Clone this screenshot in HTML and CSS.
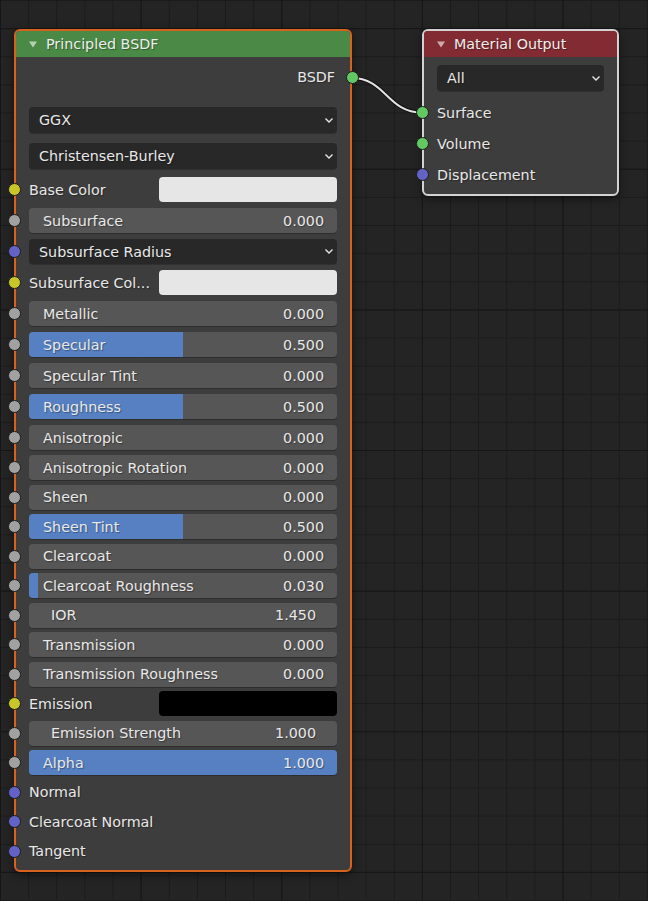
FILE: index.html
```html
<!DOCTYPE html>
<html>
<head>
<meta charset="utf-8">
<link rel="stylesheet" href="styles.css">
</head>
<body>
<div class="canvas">
  <svg class="link" width="648" height="901" viewBox="0 0 648 901">
    <path d="M351.5 78 C 386 78, 387 112.5, 422 112.5" class="link-shadow"/>
    <path d="M351.5 78 C 386 78, 387 112.5, 422 112.5" class="link-line"/>
  </svg>

  <div class="node principled">
    <div class="node-header green">
      <svg class="tri" width="8" height="7" viewBox="0 0 8 7"><path d="M0 0.5 H8 L4 6.5 Z"/></svg>
      <span class="title">Principled BSDF</span>
    </div>
    <div class="node-body body-principled">
      <div class="row out-row"><span class="lbl">BSDF</span><i class="sock sock-out green-s"></i></div>
      <div class="spacer"></div>
      <div class="row drop-row"><div class="dropdown"><span>GGX</span><svg class="chev" width="8" height="5" viewBox="0 0 8 5"><path d="M0.5 0.5 L4 4 L7.5 0.5"/></svg></div></div>
      <div class="row drop-row"><div class="dropdown"><span>Christensen-Burley</span><svg class="chev" width="8" height="5" viewBox="0 0 8 5"><path d="M0.5 0.5 L4 4 L7.5 0.5"/></svg></div></div>

      <div class="group-a">
        <div class="row"><i class="sock yellow-s"></i><span class="lbl">Base Color</span><div class="swatch white"></div></div>
        <div class="row"><i class="sock grey-s"></i><div class="field"><span>Subsurface</span><span>0.000</span></div></div>
        <div class="row"><i class="sock blue-s"></i><div class="dropdown short"><span>Subsurface Radius</span><svg class="chev" width="8" height="5" viewBox="0 0 8 5"><path d="M0.5 0.5 L4 4 L7.5 0.5"/></svg></div></div>
        <div class="row"><i class="sock yellow-s"></i><span class="lbl">Subsurface Col...</span><div class="swatch white"></div></div>
        <div class="row"><i class="sock grey-s"></i><div class="field"><span>Metallic</span><span>0.000</span></div></div>
        <div class="row"><i class="sock grey-s"></i><div class="field"><div class="fill" style="width:50%"></div><span>Specular</span><span>0.500</span></div></div>
        <div class="row"><i class="sock grey-s"></i><div class="field"><span>Specular Tint</span><span>0.000</span></div></div>
        <div class="row"><i class="sock grey-s"></i><div class="field"><div class="fill" style="width:50%"></div><span>Roughness</span><span>0.500</span></div></div>
        <div class="row"><i class="sock grey-s"></i><div class="field"><span>Anisotropic</span><span>0.000</span></div></div>
      </div>

      <div class="group-b">
        <div class="row"><i class="sock grey-s"></i><div class="field"><span>Anisotropic Rotation</span><span>0.000</span></div></div>
        <div class="row"><i class="sock grey-s"></i><div class="field"><span>Sheen</span><span>0.000</span></div></div>
        <div class="row"><i class="sock grey-s"></i><div class="field"><div class="fill" style="width:50%"></div><span>Sheen Tint</span><span>0.500</span></div></div>
        <div class="row"><i class="sock grey-s"></i><div class="field"><span>Clearcoat</span><span>0.000</span></div></div>
        <div class="row"><i class="sock grey-s"></i><div class="field"><div class="fill" style="width:3%"></div><span>Clearcoat Roughness</span><span>0.030</span></div></div>
        <div class="row"><i class="sock grey-s"></i><div class="field number"><span>IOR</span><span>1.450</span></div></div>
        <div class="row"><i class="sock grey-s"></i><div class="field"><span>Transmission</span><span>0.000</span></div></div>
        <div class="row"><i class="sock grey-s"></i><div class="field"><span>Transmission Roughness</span><span>0.000</span></div></div>
        <div class="row"><i class="sock yellow-s"></i><span class="lbl">Emission</span><div class="swatch black"></div></div>
        <div class="row"><i class="sock grey-s"></i><div class="field number"><span>Emission Strength</span><span>1.000</span></div></div>
        <div class="row"><i class="sock grey-s"></i><div class="field"><div class="fill" style="width:100%"></div><span>Alpha</span><span>1.000</span></div></div>
        <div class="row"><i class="sock blue-s"></i><span class="lbl">Normal</span></div>
        <div class="row"><i class="sock blue-s"></i><span class="lbl">Clearcoat Normal</span></div>
        <div class="row"><i class="sock blue-s"></i><span class="lbl">Tangent</span></div>
      </div>
    </div>
  </div>

  <div class="node output">
    <div class="node-header red">
      <svg class="tri" width="8" height="7" viewBox="0 0 8 7"><path d="M0 0.5 H8 L4 6.5 Z"/></svg>
      <span class="title">Material Output</span>
    </div>
    <div class="node-body body-output">
      <div class="row all-row"><div class="dropdown"><span>All</span><svg class="chev" width="8" height="5" viewBox="0 0 8 5"><path d="M0.5 0.5 L4 4 L7.5 0.5"/></svg></div></div>
      <div class="spacer-s"></div>
      <div class="row"><i class="sock green-s"></i><span class="lbl">Surface</span></div>
      <div class="row"><i class="sock green-s"></i><span class="lbl">Volume</span></div>
      <div class="row"><i class="sock blue-s"></i><span class="lbl">Displacement</span></div>
    </div>
  </div>
</div>
</body>
</html>
```

FILE: styles.css
```css
html, body {
  margin: 0;
  padding: 0;
  background: #232323;
}

.canvas {
  position: relative;
  width: 648px;
  height: 901px;
  overflow: hidden;
  font-family: "DejaVu Sans", "Liberation Sans", sans-serif;
  font-size: 14.3px;
  color: #e8e8e8;
  background-color: #242424;
  background-image:
    linear-gradient(to right, #161616 1px, transparent 1px),
    linear-gradient(to bottom, #161616 1px, transparent 1px),
    linear-gradient(to right, #1b1b1b 1px, transparent 1px),
    linear-gradient(to bottom, #1b1b1b 1px, transparent 1px);
  background-size:
    140.625px 100%,
    100% 140.625px,
    28.125px 100%,
    100% 28.125px;
  background-position:
    0 0,
    0 28.125px,
    0 0,
    0 0;
}

.link {
  position: absolute;
  left: 0;
  top: 0;
}

.link-shadow {
  fill: none;
  stroke: rgba(0, 0, 0, 0.55);
  stroke-width: 4;
}

.link-line {
  fill: none;
  stroke: #e4e4e4;
  stroke-width: 2;
}

.node {
  position: absolute;
  box-sizing: border-box;
  border-radius: 6px;
  background: rgba(64, 64, 64, 0.93);
  box-shadow: 0 3px 10px rgba(0, 0, 0, 0.45);
}

.principled {
  left: 14px;
  top: 29px;
  width: 338px;
  height: 843px;
  border: 2px solid #d6621d;
}

.output {
  left: 422px;
  top: 29px;
  width: 197px;
  height: 167px;
  border: 2px solid #d2d2d2;
}

.node-header {
  height: 26px;
  display: flex;
  align-items: center;
  padding-left: 13px;
  border-radius: 4px 4px 0 0;
  gap: 9px;
}

.node-header.green {
  background: #4a8a46;
}

.node-header.red {
  background: #832b33;
}

.tri {
  display: block;
  fill: rgba(255, 255, 255, 0.6);
  margin-top: 1px;
}

.title {
  color: #ececec;
  text-shadow: 1px 1px 1px rgba(0, 0, 0, 0.35);
}

.body-principled {
  padding: 5px 0 4px;
}

.body-output {
  padding: 5px 0 4px;
}

.row {
  position: relative;
  display: flex;
  align-items: center;
  padding: 0 13px;
  height: 31px;
}

.group-b .row {
  height: 29.5px;
}

.out-row {
  height: 30px;
  justify-content: flex-end;
  padding-right: 15px;
}

.spacer {
  height: 10px;
}

.spacer-s {
  height: 3px;
}

.drop-row {
  height: 36px;
}

.all-row {
  height: 32px;
}

.lbl {
  text-shadow: 1px 1px 1px rgba(0, 0, 0, 0.35);
  white-space: nowrap;
}

.sock {
  position: absolute;
  left: -8.5px;
  top: 50%;
  width: 11px;
  height: 11px;
  margin-top: -6.5px;
  border-radius: 50%;
  border: 1px solid #1c1c1c;
}

.sock-out {
  left: auto;
  right: -8.5px;
}

.green-s { background: #63c763; }
.grey-s { background: #a1a1a1; }
.yellow-s { background: #c7c729; }
.blue-s { background: #6363c7; }

.dropdown {
  flex: 1;
  height: 26px;
  box-sizing: border-box;
  background: #282828;
  border-radius: 4px;
  display: flex;
  align-items: center;
  justify-content: space-between;
  padding: 0 4px 0 10px;
  box-shadow: 0 1px 0 rgba(0, 0, 0, 0.2);
}

.dropdown.short {
  height: 25px;
}

.dropdown span {
  text-shadow: 1px 1px 1px rgba(0, 0, 0, 0.35);
}

.chev {
  display: block;
  fill: none;
  stroke: #e6e6e6;
  stroke-width: 1.4;
}

.swatch {
  margin-left: auto;
  width: 178px;
  height: 25px;
  border-radius: 4px;
}

.swatch.white {
  background: #e6e6e6;
}

.swatch.black {
  background: #000000;
}

.field {
  position: relative;
  flex: 1;
  height: 25px;
  box-sizing: border-box;
  background: #565656;
  border-radius: 4px;
  overflow: hidden;
  display: flex;
  align-items: center;
  justify-content: space-between;
  padding: 0 13px 0 14px;
  box-shadow: 0 1px 0 rgba(0, 0, 0, 0.25);
}

.field.number {
  padding: 0 21px 0 22px;
}

.field span {
  position: relative;
  text-shadow: 1px 1px 1px rgba(0, 0, 0, 0.35);
  white-space: nowrap;
}

.fill {
  position: absolute;
  left: 0;
  top: 0;
  bottom: 0;
  background: #5680c2;
}
```
